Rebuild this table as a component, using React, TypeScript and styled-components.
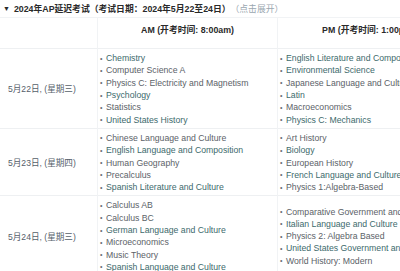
import * as React from 'react';
import styled, { createGlobalStyle } from 'styled-components';

const Global = createGlobalStyle`
  html, body {
    margin: 0;
    padding: 0;
    background: #ffffff;
    overflow: hidden;
  }
  body {
    font-family: "Liberation Sans", Arial, "Noto Sans CJK SC", sans-serif;
  }
`;

const Page = styled.div({
  width: "400px",
  height: "271px",
  overflow: "hidden",
});

const Title = styled.div({
  height: "17px",
  display: "flex",
  alignItems: "center",
  paddingLeft: "3px",
  fontSize: "8.8px",
  fontWeight: "bold",
  color: "#2a2a2a",
  whiteSpace: "nowrap",
});

const Arrow = styled.span({
  fontSize: "7px",
  marginRight: "4px",
});

const Hint = styled.span({
  fontWeight: "normal",
  color: "#9aa7b0",
});

const Table = styled.div({
  display: "grid",
  gridTemplateColumns: "97px 180px 182px",
  width: "459px",
  borderTop: "1px solid #f1f3f5",
});

const HeadCell = styled.div<{ $first?: boolean }>`
  height: 31px;
  padding-top: 5px;
  box-sizing: border-box;
  text-align: center;
  font-size: 8.8px;
  font-weight: bold;
  color: #2a2a2a;
  white-space: nowrap;
  border-bottom: 1px solid #eef0f2;
  border-left: ${p => (p.$first ? "none" : "1px solid #f1f3f5")};
`;

const DateCell = styled.div({
  display: "flex",
  alignItems: "center",
  paddingLeft: "8px",
  fontSize: "8.6px",
  color: "#55606a",
  whiteSpace: "nowrap",
  borderBottom: "1px solid #eef0f2",
});

const ListCell = styled.ul({
  margin: 0,
  padding: "3px 0 2px 2px",
  listStyle: "none",
  minWidth: 0,
  overflow: "hidden",
  borderBottom: "1px solid #eef0f2",
  borderLeft: "1px solid #f1f3f5",
  display: "flex",
  flexDirection: "column",
  justifyContent: "center",
});

const Item = styled.li<{ $teal?: boolean }>`
  display: flex;
  align-items: center;
  height: 12.3px;
  font-size: 8.7px;
  white-space: nowrap;
  color: ${p => (p.$teal ? "#3d6a6c" : "#5b6268")};
  &::before {
    content: "•";
    width: 6px;
    flex: none;
    color: #6a7075;
    font-size: 7px;
  }
`;

type Subj = [string, boolean];

const rows: { date: string; am: Subj[]; pm: Subj[] }[] = [
  {
    date: "5月22日, (星期三)",
    am: [
      ["Chemistry", true],
      ["Computer Science A", false],
      ["Physics C: Electricity and Magnetism", false],
      ["Psychology", true],
      ["Statistics", false],
      ["United States History", true],
    ],
    pm: [
      ["English Literature and Composition", true],
      ["Environmental Science", true],
      ["Japanese Language and Culture", false],
      ["Latin", true],
      ["Macroeconomics", false],
      ["Physics C: Mechanics", true],
    ],
  },
  {
    date: "5月23日, (星期四)",
    am: [
      ["Chinese Language and Culture", false],
      ["English Language and Composition", true],
      ["Human Geography", false],
      ["Precalculus", false],
      ["Spanish Literature and Culture", true],
    ],
    pm: [
      ["Art History", false],
      ["Biology", true],
      ["European History", false],
      ["French Language and Culture", true],
      ["Physics 1:Algebra-Based", false],
    ],
  },
  {
    date: "5月24日, (星期三)",
    am: [
      ["Calculus AB", false],
      ["Calculus BC", false],
      ["German Language and Culture", true],
      ["Microeconomics", false],
      ["Music Theory", false],
      ["Spanish Language and Culture", true],
    ],
    pm: [
      ["Comparative Government and Politics", false],
      ["Italian Language and Culture", true],
      ["Physics 2: Algebra Based", false],
      ["United States Government and Politics", true],
      ["World History: Modern", false],
    ],
  },
];

class App extends React.Component {
  render() {
    return (
      <Page>
        <Global />
        <Title>
          <Arrow>▼</Arrow>
          2024年AP延迟考试（考试日期：2024年5月22至24日）<Hint>（点击展开）</Hint>
        </Title>
        <Table>
          <HeadCell $first />
          <HeadCell>AM (开考时间: 8:00am)</HeadCell>
          <HeadCell>PM (开考时间: 1:00pm)</HeadCell>
          {rows.map(r => (
            <React.Fragment key={r.date}>
              <DateCell>{r.date}</DateCell>
              <ListCell>
                {r.am.map(([t, teal]) => (
                  <Item key={t} $teal={teal}>{t}</Item>
                ))}
              </ListCell>
              <ListCell>
                {r.pm.map(([t, teal]) => (
                  <Item key={t} $teal={teal}>{t}</Item>
                ))}
              </ListCell>
            </React.Fragment>
          ))}
        </Table>
      </Page>
    );
  }
}

export default App;
